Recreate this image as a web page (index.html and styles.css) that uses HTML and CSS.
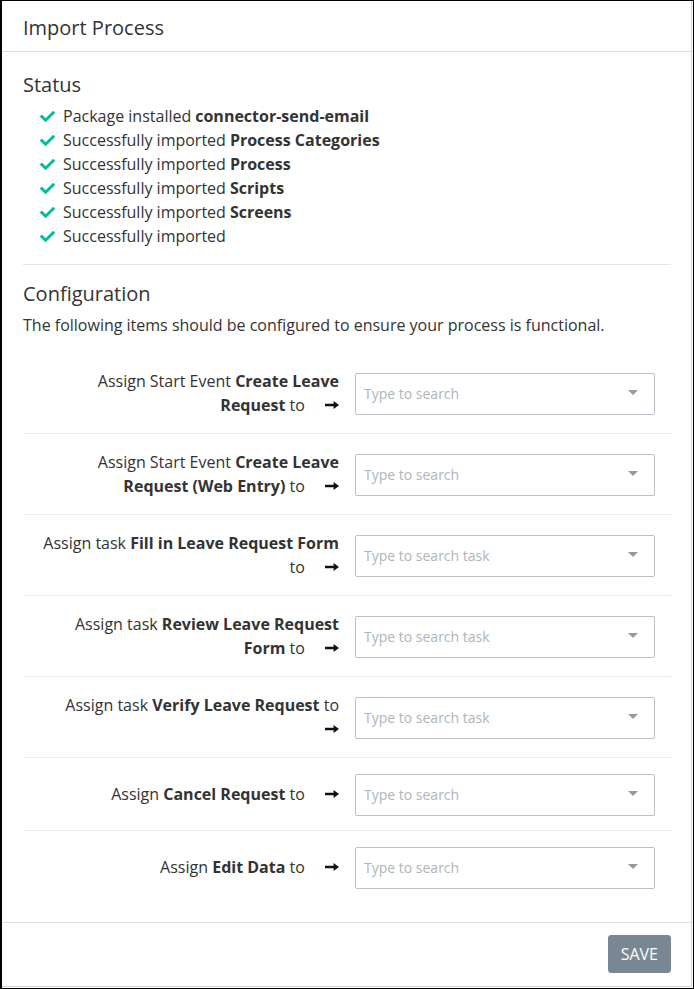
FILE: index.html
```html
<!DOCTYPE html>
<html lang="en">
<head>
<meta charset="utf-8">
<title>Import Process</title>
<link rel="stylesheet" href="styles.css">
</head>
<body>
<div class="frame">
  <div class="modal">
    <div class="modal-header">
      <h1 class="modal-title">Import Process</h1>
    </div>
    <div class="modal-body">
      <h2 class="section-title">Status</h2>
      <ul class="status-list">
        <li><svg class="check" viewBox="0 0 512 512"><path d="M173.9 439.4l-166.4-166.4c-10-10-10-26.2 0-36.2l36.2-36.2c10-10 26.2-10 36.2 0L192 312.7 432.1 72.6c10-10 26.2-10 36.2 0l36.2 36.2c10 10 10 26.2 0 36.2l-294.4 294.4c-10 10-26.2 10-36.2 0z"/></svg>Package installed <b>connector-send-email</b></li>
        <li><svg class="check" viewBox="0 0 512 512"><path d="M173.9 439.4l-166.4-166.4c-10-10-10-26.2 0-36.2l36.2-36.2c10-10 26.2-10 36.2 0L192 312.7 432.1 72.6c10-10 26.2-10 36.2 0l36.2 36.2c10 10 10 26.2 0 36.2l-294.4 294.4c-10 10-26.2 10-36.2 0z"/></svg>Successfully imported <b>Process Categories</b></li>
        <li><svg class="check" viewBox="0 0 512 512"><path d="M173.9 439.4l-166.4-166.4c-10-10-10-26.2 0-36.2l36.2-36.2c10-10 26.2-10 36.2 0L192 312.7 432.1 72.6c10-10 26.2-10 36.2 0l36.2 36.2c10 10 10 26.2 0 36.2l-294.4 294.4c-10 10-26.2 10-36.2 0z"/></svg>Successfully imported <b>Process</b></li>
        <li><svg class="check" viewBox="0 0 512 512"><path d="M173.9 439.4l-166.4-166.4c-10-10-10-26.2 0-36.2l36.2-36.2c10-10 26.2-10 36.2 0L192 312.7 432.1 72.6c10-10 26.2-10 36.2 0l36.2 36.2c10 10 10 26.2 0 36.2l-294.4 294.4c-10 10-26.2 10-36.2 0z"/></svg>Successfully imported <b>Scripts</b></li>
        <li><svg class="check" viewBox="0 0 512 512"><path d="M173.9 439.4l-166.4-166.4c-10-10-10-26.2 0-36.2l36.2-36.2c10-10 26.2-10 36.2 0L192 312.7 432.1 72.6c10-10 26.2-10 36.2 0l36.2 36.2c10 10 10 26.2 0 36.2l-294.4 294.4c-10 10-26.2 10-36.2 0z"/></svg>Successfully imported <b>Screens</b></li>
        <li><svg class="check" viewBox="0 0 512 512"><path d="M173.9 439.4l-166.4-166.4c-10-10-10-26.2 0-36.2l36.2-36.2c10-10 26.2-10 36.2 0L192 312.7 432.1 72.6c10-10 26.2-10 36.2 0l36.2 36.2c10 10 10 26.2 0 36.2l-294.4 294.4c-10 10-26.2 10-36.2 0z"/></svg>Successfully imported</li>
      </ul>
      <hr class="divider">
      <h2 class="section-title">Configuration</h2>
      <p class="intro">The following items should be configured to ensure your process is functional.</p>
      <div class="config-list">
        <div class="config-row">
          <div class="config-label"><span class="label-text">Assign Start Event <b>Create Leave Request</b> to <svg class="arrow" viewBox="0 0 14 8"><path d="M0 2.7h8.6V0L14 4 8.6 8V5.3H0z"/></svg></span></div>
          <div class="select"><span class="placeholder">Type to search</span><span class="caret"></span></div>
        </div>
        <div class="config-row">
          <div class="config-label"><span class="label-text">Assign Start Event <b>Create Leave Request (Web Entry)</b> to <svg class="arrow" viewBox="0 0 14 8"><path d="M0 2.7h8.6V0L14 4 8.6 8V5.3H0z"/></svg></span></div>
          <div class="select"><span class="placeholder">Type to search</span><span class="caret"></span></div>
        </div>
        <div class="config-row">
          <div class="config-label"><span class="label-text">Assign task <b>Fill in Leave Request Form</b> to <svg class="arrow" viewBox="0 0 14 8"><path d="M0 2.7h8.6V0L14 4 8.6 8V5.3H0z"/></svg></span></div>
          <div class="select"><span class="placeholder">Type to search task</span><span class="caret"></span></div>
        </div>
        <div class="config-row">
          <div class="config-label"><span class="label-text">Assign task <b>Review Leave Request Form</b> to <svg class="arrow" viewBox="0 0 14 8"><path d="M0 2.7h8.6V0L14 4 8.6 8V5.3H0z"/></svg></span></div>
          <div class="select"><span class="placeholder">Type to search task</span><span class="caret"></span></div>
        </div>
        <div class="config-row">
          <div class="config-label"><span class="label-text">Assign task <b>Verify Leave Request</b> to <svg class="arrow" viewBox="0 0 14 8"><path d="M0 2.7h8.6V0L14 4 8.6 8V5.3H0z"/></svg></span></div>
          <div class="select"><span class="placeholder">Type to search task</span><span class="caret"></span></div>
        </div>
        <div class="config-row">
          <div class="config-label"><span class="label-text">Assign <b>Cancel Request</b> to <svg class="arrow" viewBox="0 0 14 8"><path d="M0 2.7h8.6V0L14 4 8.6 8V5.3H0z"/></svg></span></div>
          <div class="select"><span class="placeholder">Type to search</span><span class="caret"></span></div>
        </div>
        <div class="config-row">
          <div class="config-label"><span class="label-text">Assign <b>Edit Data</b> to <svg class="arrow" viewBox="0 0 14 8"><path d="M0 2.7h8.6V0L14 4 8.6 8V5.3H0z"/></svg></span></div>
          <div class="select"><span class="placeholder">Type to search</span><span class="caret"></span></div>
        </div>
      </div>
    </div>
    <div class="modal-footer">
      <button class="btn-save" type="button">SAVE</button>
    </div>
  </div>
</div>
</body>
</html>
```

FILE: styles.css
```css
* { box-sizing: border-box; }

html, body {
  margin: 0;
  padding: 0;
  background: #fff;
}

body {
  font-family: "Open Sans", "Liberation Sans", sans-serif;
  font-size: 16px;
  line-height: 24px;
  color: #333;
}

.frame {
  width: 694px;
  height: 989px;
  border: 1px solid #000;
  border-left-width: 2px;
  display: flex;
  flex-direction: column;
}

.modal {
  flex: 1;
  display: flex;
  flex-direction: column;
  margin: 0 1px 1px 0;
  border-right: 1px solid #d6d6d6;
  border-bottom: 1px solid #d6d6d6;
  background: #fff;
}

.modal-header {
  height: 51px;
  padding: 12px 20px 0 21px;
  border-bottom: 1px solid #e0e0e0;
}

.modal-title {
  margin: 0;
  font-size: 20px;
  font-weight: 400;
  line-height: 30px;
  color: #333;
}

.modal-body {
  flex: 1;
  padding: 21px 20px 16px 21px;
}

.section-title {
  margin: 0 0 7px;
  font-size: 20px;
  font-weight: 400;
  line-height: 24px;
  color: #333;
}

.status-list {
  list-style: none;
  margin: 0;
  padding: 0 0 0 17px;
}

.status-list li {
  display: flex;
  align-items: center;
  height: 24px;
  white-space: nowrap;
}

.status-list b { font-weight: 700; margin-left: 4px; }

.check {
  width: 15px;
  height: 15px;
  margin-right: 8px;
  fill: #00bf9c;
  flex: none;
}

.divider {
  margin: 16px 0 17px;
  border: 0;
  border-top: 1px solid #e5e5e5;
  height: 0;
}

.intro {
  margin: 0 0 16px;
}

.config-row {
  display: grid;
  grid-template-columns: 316px 300px;
  column-gap: 16px;
  align-items: center;
  padding: 16px 0;
  border-bottom: 1px solid #ececec;
}

.config-row:last-child { border-bottom: 0; }

.config-label {
  padding-left: 14px;
  text-align: right;
}

.config-label b { font-weight: 700; }

.arrow {
  display: inline-block;
  width: 14px;
  height: 8px;
  margin-left: 16px;
  vertical-align: 2px;
  fill: #111;
}

.select {
  position: relative;
  height: 42px;
  margin-bottom: -2px;
  border: 1px solid #b9c0c7;
  border-radius: 2px;
  padding: 0 8px;
  display: flex;
  align-items: center;
}

.placeholder {
  font-size: 14px;
  color: #adb5bd;
}

.caret {
  position: absolute;
  right: 16px;
  top: 16px;
  width: 0;
  height: 0;
  border-left: 5px solid transparent;
  border-right: 5px solid transparent;
  border-top: 5px solid #999;
}

.modal-footer {
  display: flex;
  justify-content: flex-end;
  padding: 12px 20px 13px 0;
  border-top: 1px solid #e0e0e0;
}

.btn-save {
  font-family: "Open Sans", "Liberation Sans", sans-serif;
  font-size: 16px;
  line-height: 24px;
  padding: 6px 12px;
  border: 1px solid #788793;
  border-radius: 3px;
  background: #788793;
  color: #fff;
}
```
